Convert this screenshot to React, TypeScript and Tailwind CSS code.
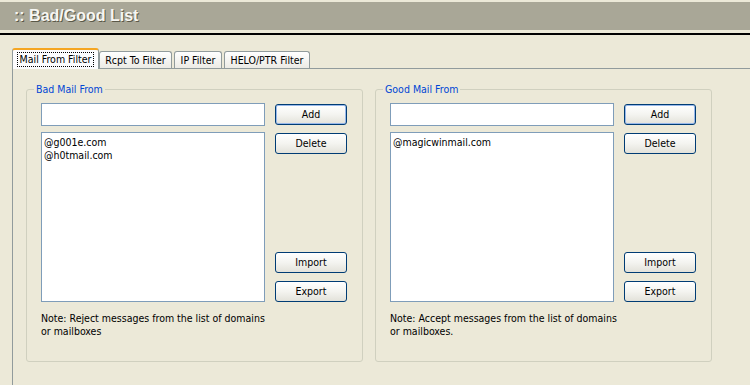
import React from "react";

const font = { fontFamily: '"DejaVu Sans Condensed", "Liberation Sans", Arial, sans-serif' };
const headFont = { fontFamily: '"Liberation Sans", Arial, sans-serif' };

function XPButton({ label, className = "" }: { label: string; className?: string }) {
  return (
    <div
      className={
        "h-[21px] w-[72px] rounded-[3px] border border-[#003c74] bg-gradient-to-b from-[#ffffff] via-[#f4f4f0] to-[#e3e2da] flex items-center justify-center text-[10.5px] text-black " +
        className
      }
    >
      {label}
    </div>
  );
}

function Group({
  title,
  items,
  note,
}: {
  title: string;
  items: string[];
  note: string[];
}) {
  return (
    <div className="relative w-[337px] h-[273px] rounded-[3px] border border-[#d0d0bf]">
      <div className="absolute left-[7px] top-[-8px] bg-[#ece9d8] px-[2px] text-[10.5px] leading-[14px] text-[#0046d5] whitespace-nowrap">
        {title}
      </div>
      <div className="flex gap-[10px] pl-[14px] pt-[13px]">
        <div className="flex flex-col w-[224px]">
          <div className="h-[23px] border border-[#7f9db9] bg-white" />
          <div className="mt-[6px] h-[170px] border border-[#7f9db9] bg-white px-[2px] pt-[3px] text-[10.5px] leading-[13px] text-black">
            {items.map((it) => (
              <div key={it}>{it}</div>
            ))}
          </div>
          <div className="mt-[10px] text-[10.5px] leading-[13px] text-black whitespace-nowrap">
            {note.map((n) => (
              <div key={n}>{n}</div>
            ))}
          </div>
        </div>
        <div className="flex flex-col pt-[1px]">
          <XPButton label="Add" className="shadow-[inset_0_0_0_1px_#98b8ea]" />
          <XPButton label="Delete" className="mt-[8px]" />
          <XPButton label="Import" className="mt-[98px]" />
          <XPButton label="Export" className="mt-[8px]" />
        </div>
      </div>
    </div>
  );
}

export default function App() {
  return (
    <div className="w-[750px] h-[385px] overflow-hidden bg-[#ece9d8]" style={font}>
      <div className="mt-[2px] h-[28px] bg-[#a9a797] flex items-center pl-[14px]" style={headFont}>
        <span className="text-[16px] font-bold text-[#f6f6f2] [text-shadow:1px_1px_0_#5a5848]">
          :: Bad/Good List
        </span>
      </div>
      <div className="mt-[3px] h-[2px] bg-black" />
      <div className="mt-[13px] ml-[12px]">
        <div className="flex items-end h-[20px]">
          <div className="relative z-10 h-[21px] w-[87px] -mb-[1px] bg-[#fcfcfe] border-x border-[#919b9c] border-t-[2px] border-t-[#f5a623] rounded-t-[3px] flex items-start justify-center pt-[2px]">
            <span className="border border-dotted border-black px-[2px] text-[10.5px] leading-[13px] text-black whitespace-nowrap">
              Mail From Filter
            </span>
          </div>
          <div className="h-[17px] w-[73px] flex justify-center bg-gradient-to-b from-white to-[#ecebe5] border border-b-0 border-[#919b9c] rounded-t-[3px] text-[10.5px] leading-[16px] text-black whitespace-nowrap">
            Rcpt To Filter
          </div>
          <div className="h-[17px] w-[48px] flex justify-center ml-[2px] bg-gradient-to-b from-white to-[#ecebe5] border border-b-0 border-[#919b9c] rounded-t-[3px] text-[10.5px] leading-[16px] text-black whitespace-nowrap">
            IP Filter
          </div>
          <div className="h-[17px] w-[86px] flex justify-center ml-[2px] bg-gradient-to-b from-white to-[#ecebe5] border border-b-0 border-[#919b9c] rounded-t-[3px] text-[10.5px] leading-[16px] text-black whitespace-nowrap">
            HELO/PTR Filter
          </div>
        </div>
        <div className="h-[320px] border-l border-t border-[#919b9c] pl-[13px] pt-[20px] flex gap-[12px]">
          <Group
            title="Bad Mail From"
            items={["@g001e.com", "@h0tmail.com"]}
            note={["Note: Reject messages from the list of domains", "or mailboxes"]}
          />
          <Group
            title="Good Mail From"
            items={["@magicwinmail.com"]}
            note={["Note: Accept messages from the list of domains", "or mailboxes."]}
          />
        </div>
      </div>
    </div>
  );
}
